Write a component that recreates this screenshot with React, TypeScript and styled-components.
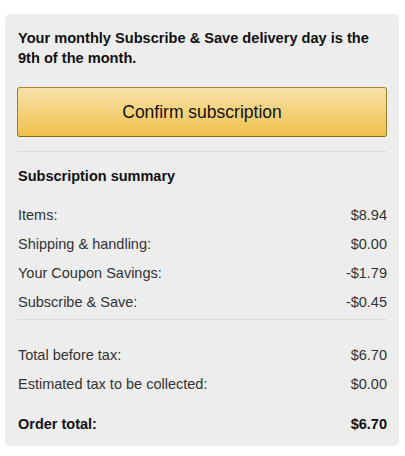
import React from 'react';
import styled, { createGlobalStyle } from 'styled-components';

const GlobalStyle = createGlobalStyle`
    body {
        margin: 0;
        background: #ffffff;
        font-family: "Liberation Sans", Arial, sans-serif;
        color: #111111;
    }
`;

const Panel = styled.div`
    margin: 14px 6px 10px 5px;
    padding: 14px 12px 7px 12px;
    background-color: #ededed;
    border-radius: 5px;
    display: flex;
    flex-direction: column;
`;

const Notice = styled.div`
    font-size: 14.6px;
    font-weight: bold;
    line-height: 20px;
    padding-left: 1px;
`;

const ConfirmButton = styled.button`
    margin-top: 19px;
    height: 50px;
    padding-top: 2px;
    border: 1px solid;
    border-color: #a88734 #9c7e31 #846a29;
    border-radius: 3px;
    background: linear-gradient(to bottom, #f8e2ab, #f0c14b);
    font-family: "Liberation Sans", Arial, sans-serif;
    font-size: 17.5px;
    color: #111111;
    cursor: pointer;
`;

const Divider = styled.hr<{ $gapTop: number }>`
    border: 0;
    border-top: 1px solid #dcdcdc;
    margin: ${(p) => p.$gapTop}px 0 0 0;
    height: 0;
`;

const SummaryTitle = styled.div`
    margin-top: 14px;
    margin-bottom: 15px;
    font-size: 14.5px;
    font-weight: bold;
    line-height: 20px;
    padding-left: 1px;
`;

const Rows = styled.div<{ $gapTop?: number }>`
    display: flex;
    flex-direction: column;
    margin-top: ${(p) => p.$gapTop || 0}px;
`;

const Row = styled.div<{ $total?: boolean }>`
    display: flex;
    justify-content: space-between;
    line-height: 29px;
    font-size: 14.5px;
    font-weight: ${(p) => (p.$total ? 'bold' : 'normal')};
    color: ${(p) => (p.$total ? '#111111' : '#333333')};
    margin-top: ${(p) => (p.$total ? 11 : 0)}px;
    padding-left: 1px;
`;

type Line = { label: string; value: string };

const summary: Line[] = [
    { label: 'Items:', value: '$8.94' },
    { label: 'Shipping & handling:', value: '$0.00' },
    { label: 'Your Coupon Savings:', value: '-$1.79' },
    { label: 'Subscribe & Save:', value: '-$0.45' },
];

const totals: Line[] = [
    { label: 'Total before tax:', value: '$6.70' },
    { label: 'Estimated tax to be collected:', value: '$0.00' },
];

export default function App() {
    return (
        <>
            <GlobalStyle />
            <Panel>
                <Notice>Your monthly Subscribe &amp; Save delivery day is the 9th of the month.</Notice>
                <ConfirmButton>Confirm subscription</ConfirmButton>
                <Divider $gapTop={14} />
                <SummaryTitle>Subscription summary</SummaryTitle>
                <Rows>
                    {summary.map((line) => (
                        <Row key={line.label}>
                            <span>{line.label}</span>
                            <span>{line.value}</span>
                        </Row>
                    ))}
                </Rows>
                <Divider $gapTop={2} />
                <Rows $gapTop={21}>
                    {totals.map((line) => (
                        <Row key={line.label}>
                            <span>{line.label}</span>
                            <span>{line.value}</span>
                        </Row>
                    ))}
                    <Row $total>
                        <span>Order total:</span>
                        <span>$6.70</span>
                    </Row>
                </Rows>
            </Panel>
        </>
    );
}
